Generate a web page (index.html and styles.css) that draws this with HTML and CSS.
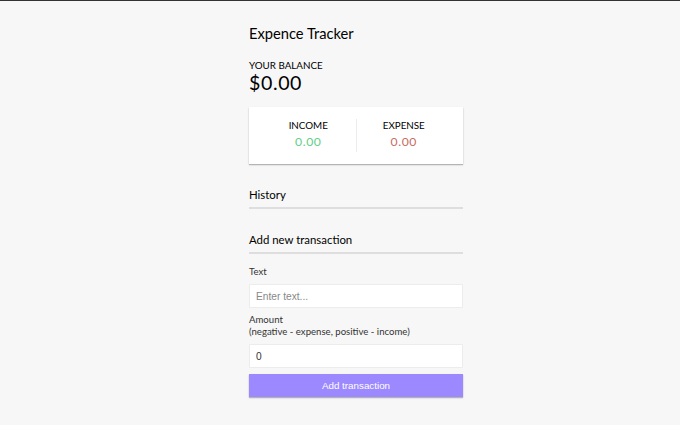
FILE: index.html
```html
<!DOCTYPE html>
<html lang="en">
<head>
<meta charset="UTF-8">
<title>Expence Tracker</title>
<link rel="stylesheet" href="styles.css">
</head>
<body>
<div class="page">
  <div class="container">
    <h2 class="title">Expence Tracker</h2>
    <h4 class="caption">Your Balance</h4>
    <h1 class="balance">$0.00</h1>
    <div class="inc-exp">
      <div class="inc-exp-col">
        <h4 class="caption">Income</h4>
        <p class="money plus">0.00</p>
      </div>
      <div class="inc-exp-col">
        <h4 class="caption">Expense</h4>
        <p class="money minus">0.00</p>
      </div>
    </div>
    <h3 class="section">History</h3>
    <ul class="list"></ul>
    <h3 class="section">Add new transaction</h3>
    <form class="form">
      <div class="form-control">
        <label class="label" for="text">Text</label>
        <input class="field" type="text" id="text" placeholder="Enter text...">
      </div>
      <div class="form-control">
        <label class="label" for="amount">Amount <br>(negative - expense, positive - income)</label>
        <input class="field" type="number" id="amount" value="0">
      </div>
      <button class="btn" type="button">Add transaction</button>
    </form>
  </div>
</div>
</body>
</html>
```
FILE: styles.css
```css
* { box-sizing: border-box; }
html, body { margin: 0; padding: 0; }
body {
  background: #f7f7f7;
  border-top: 1px solid #333;
  font-family: Lato, "Noto Sans", sans-serif;
  color: #000;
  min-height: 100vh;
}
.page {
  display: flex;
  justify-content: center;
  padding-left: 32px;
}
.container {
  width: 214px;
  padding-top: 22px;
}
.title {
  margin: 0;
  font-size: 14.7px;
  font-weight: 400;
  line-height: 20px;
  letter-spacing: 0;
}
.caption {
  margin: 0;
  font-size: 9.8px;
  font-weight: 400;
  line-height: 12px;
  text-transform: uppercase;
}
.container > .caption { margin-top: 16px; }
.balance {
  margin: 0;
  font-size: 19.6px;
  font-weight: 400;
  line-height: 24px;
  letter-spacing: 0.6px;
}
.inc-exp {
  display: flex;
  background: #fff;
  box-shadow: 0 1px 2px rgba(0,0,0,0.12), 0 1px 1px rgba(0,0,0,0.2);
  padding: 12px;
  margin: 12px 0;
}
.inc-exp-col {
  flex: 1;
  text-align: center;
}
.inc-exp-col:first-child { border-right: 1px solid #ececec; }
.money {
  margin: 3px 0;
  font-size: 12.2px;
  letter-spacing: 0.6px;
  line-height: 15px;
}
.plus { color: #62cf88; }
.minus { color: #c96b62; }
.section {
  margin: 24px 0 6px;
  padding-bottom: 5px;
  border-bottom: 2px solid #dedede;
  font-size: 11.4px;
  font-weight: 400;
  line-height: 14px;
}
.list { margin: 0; padding: 0; list-style: none; }
.form-control { display: flex; flex-direction: column; }
.label {
  margin: 6px 0;
  font-size: 9.6px;
  line-height: 12px;
  color: #333;
}
.field {
  display: block;
  width: 100%;
  height: 24px;
  padding: 0 6px;
  border: 1px solid #ececec;
  border-radius: 1px;
  background: #fff;
  font-family: "Liberation Sans", Arial, sans-serif;
  font-size: 10.2px;
  color: #333;
}
.field::placeholder { color: #888; }
.btn {
  display: block;
  width: 100%;
  height: 23px;
  margin: 6px 0 18px;
  border: 0;
  background: #9c88ff;
  color: #fff;
  box-shadow: 0 1px 2px rgba(0,0,0,0.12), 0 1px 1px rgba(0,0,0,0.2);
  font-family: "Liberation Sans", Arial, sans-serif;
  font-size: 9.8px;
}
```
